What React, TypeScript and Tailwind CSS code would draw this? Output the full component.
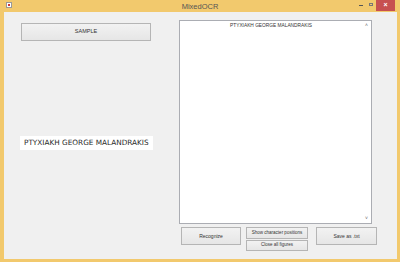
export default function App() {
  const btn =
    'flex items-center justify-center border border-[#b5b5b5] bg-gradient-to-b from-[#f2f2f2] to-[#e6e6e6] text-[#333] leading-none';
  return (
    <div className="w-[400px] h-[262px] flex flex-col bg-[#f2c96d] overflow-hidden" style={{ fontFamily: '"Liberation Sans", Arial, sans-serif' }}>
      {/* title bar */}
      <div className="h-[12px] flex items-start relative">
        <div className="ml-[6px] mt-[2px] w-[6px] h-[6px] bg-white border border-[#999] flex items-center justify-center">
          <div className="w-[2px] h-[2px] bg-[#c33]" />
        </div>
        <div className="absolute left-0 right-0 top-[1px] text-center text-[7.5px] text-[#555]">MixedOCR</div>
        <div className="ml-auto flex items-start">
          <div className="w-[10px] h-[9px] flex items-center justify-center">
            <div className="w-[4px] h-[1px] bg-[#555] mt-[2px]" />
          </div>
          <div className="w-[10px] h-[9px] flex items-center justify-center">
            <div className="w-[4px] h-[3px] border border-[#777]" />
          </div>
          <div className="w-[19px] h-[11px] mr-[5px] bg-[#c75050] flex items-center justify-center text-white text-[7px] font-bold">
            ×
          </div>
        </div>
      </div>
      {/* body */}
      <div className="flex-1 flex mx-[4px] mr-[3px] mb-[3px] bg-[#f0f0f0]">
        {/* left column */}
        <div className="w-[175px] flex flex-col">
          <div className={`${btn} ml-[17px] mt-[11px] w-[130px] h-[18px] text-[5.5px]`}>SAMPLE</div>
          <div className="ml-[16px] mt-[95px] w-[133px] h-[14px] bg-white flex items-center pl-[4px] text-[7.3px] text-[#2a2a2a]" style={{ fontFamily: '"DejaVu Sans", sans-serif' }}>
            PTYXIAKH GEORGE MALANDRAKIS
          </div>
        </div>
        {/* right column */}
        <div className="flex flex-col">
          <div className="mt-[8px] w-[193px] h-[204px] bg-white border border-[#abadb3] flex">
            <div className="flex-1 text-center text-[4.8px] text-[#333] pt-[1px]">PTYXIAKH GEORGE MALANDRAKIS</div>
            <div className="w-[9px] flex flex-col items-center justify-between py-[1px] text-[5px] text-[#666]">
              <span>˄</span>
              <span>˅</span>
            </div>
          </div>
          <div className="flex mt-[3px] ml-[2px]">
            <div className={`${btn} w-[60px] h-[18px] text-[5px]`}>Recognize</div>
            <div className="flex flex-col ml-[5px] gap-[1px]">
              <div className={`${btn} w-[62px] h-[12px] text-[4.5px]`}>Show character positions</div>
              <div className={`${btn} w-[62px] h-[11px] text-[4.5px]`}>Close all figures</div>
            </div>
            <div className={`${btn} ml-[8px] w-[61px] h-[18px] text-[5px]`}>Save as .txt</div>
          </div>
        </div>
      </div>
    </div>
  );
}
